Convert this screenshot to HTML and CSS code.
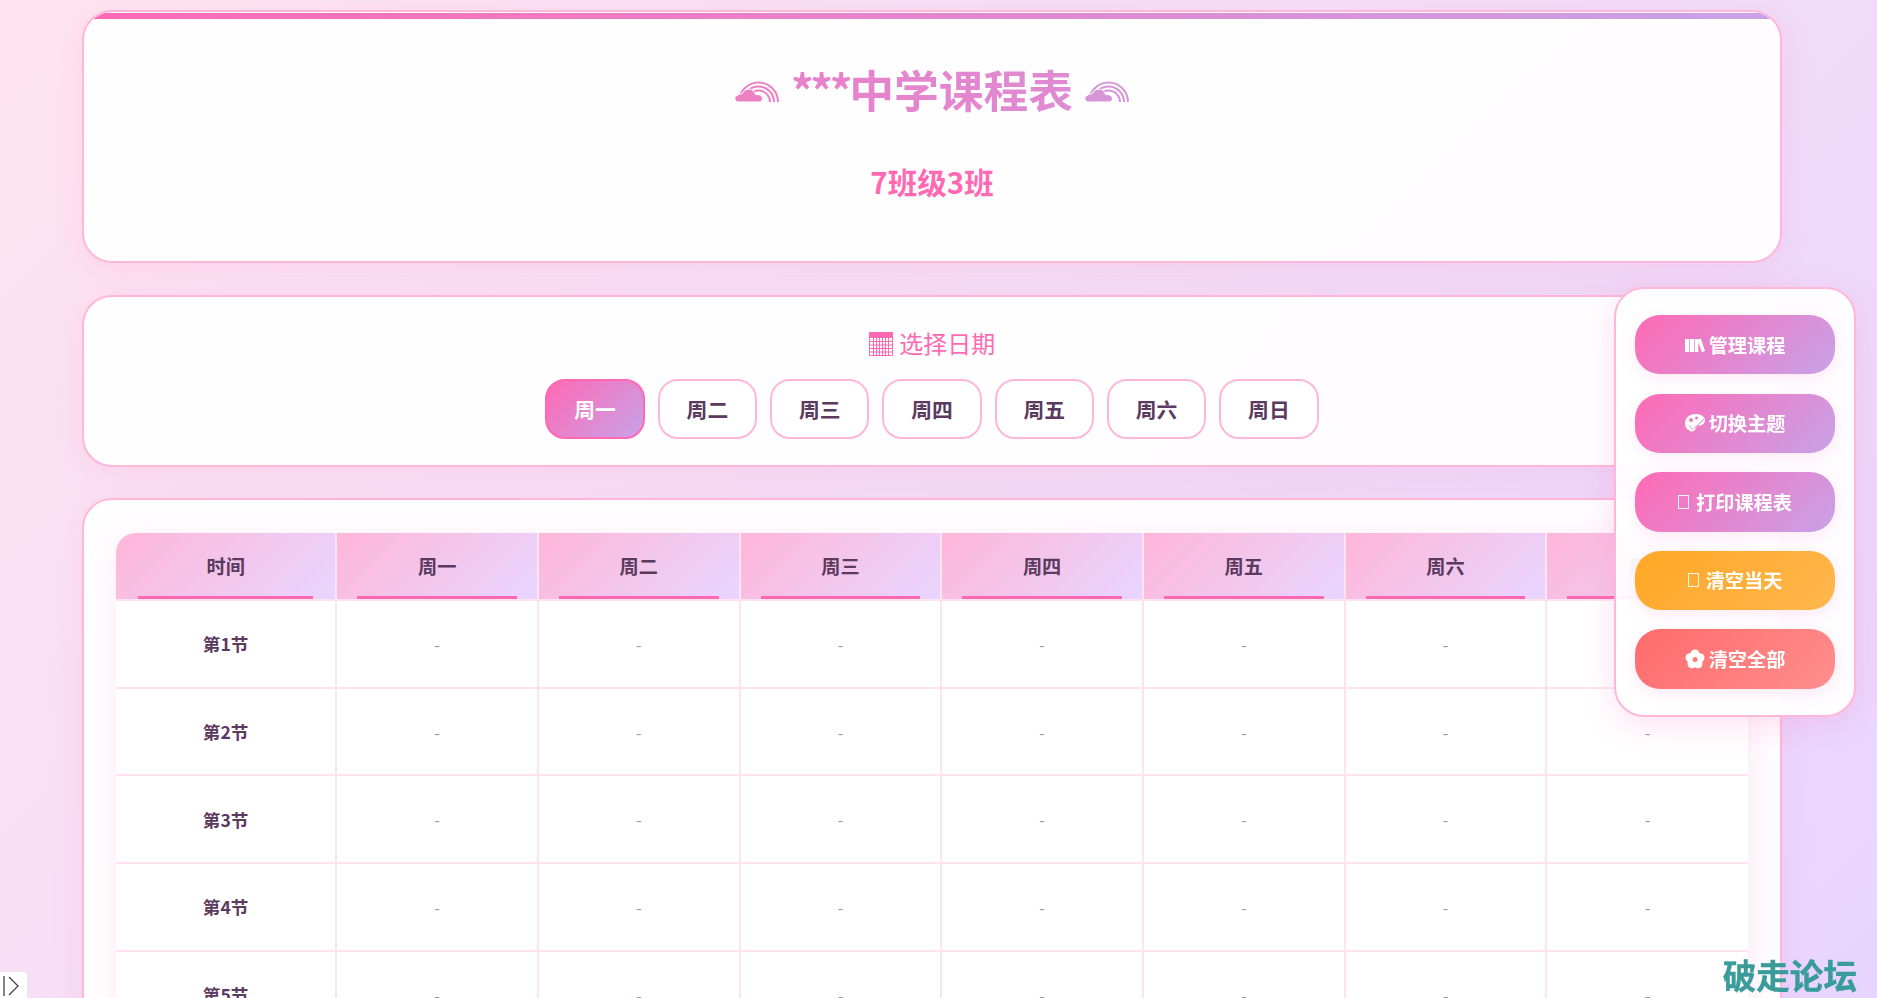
FILE: index.html
```html
<!DOCTYPE html>
<html lang="zh-CN">
<head>
  <meta charset="UTF-8">
  <title>***中学课程表</title>
  <link rel="stylesheet" href="styles.css">
</head>
<body>
<div class="container">
  <header class="card header">
    <h1 class="title">
      <svg class="rainbow rainbow-left" viewBox="0 0 44 21"><use href="#rainbow-art"/></svg>
      <span class="title-text"><span class="stars">***</span>中学课程表</span>
      <svg class="rainbow rainbow-right" viewBox="0 0 44 21"><use href="#rainbow-art"/></svg>
    </h1>
    <div class="class-name">7班级3班</div>
  </header>

  <section class="card date-card">
    <h3 class="date-title">
      <svg class="calendar" viewBox="0 0 24 24">
        <path d="M0 0h24v6H0z"/>
        <path class="calendar-lines" d="M.5 6v17.500h23V6M4.500 6v17.500M7.500 6v17.500M10.500 6v17.500M13.500 6v17.500M16.500 6v17.500M19.500 6v17.500M.5 9.500h23M.5 13h23M.5 16.500h23M.5 20h23"/>
      </svg>
      选择日期
    </h3>
    <div class="days">
      <button class="day active">周一</button>
      <button class="day">周二</button>
      <button class="day">周三</button>
      <button class="day">周四</button>
      <button class="day">周五</button>
      <button class="day">周六</button>
      <button class="day">周日</button>
    </div>
  </section>

  <section class="card table-card">
    <table class="schedule">
      <thead>
        <tr><th class="time-col">时间</th><th>周一</th><th>周二</th><th>周三</th><th>周四</th><th>周五</th><th>周六</th><th>周日</th></tr>
      </thead>
      <tbody>
        <tr><td class="period">第1节</td><td>-</td><td>-</td><td>-</td><td>-</td><td>-</td><td>-</td><td>-</td></tr>
        <tr><td class="period">第2节</td><td>-</td><td>-</td><td>-</td><td>-</td><td>-</td><td>-</td><td>-</td></tr>
        <tr><td class="period">第3节</td><td>-</td><td>-</td><td>-</td><td>-</td><td>-</td><td>-</td><td>-</td></tr>
        <tr><td class="period">第4节</td><td>-</td><td>-</td><td>-</td><td>-</td><td>-</td><td>-</td><td>-</td></tr>
        <tr><td class="period">第5节</td><td>-</td><td>-</td><td>-</td><td>-</td><td>-</td><td>-</td><td>-</td></tr>
      </tbody>
    </table>
  </section>
</div>

<aside class="actions">
  <button class="action">
    <svg class="action-icon" viewBox="0 0 20 20"><path d="M0 4h4.300v13H0zM5 4h4.300v13H5zM10 4h3.300v13H10zM13.300 4.500l2.500-1L20 16l-3 1.200-3.700-9.700z"/></svg>
    管理课程
  </button>
  <button class="action">
    <svg class="action-icon" viewBox="0 0 20 20"><path fill-rule="evenodd" d="M10.500 1C16 1 20 3.500 20 7.500c0 3-3 5-6 5-2 0-2.500 1-3 2.500-.5 1.800-2 3.500-4.500 3.500-1 0-1.500-.5-2-1C2 16.500 0 14 0 10.500 0 5 4.500 1 10.500 1zM6 5a2 2 0 1 0 0 4 2 2 0 0 0 0-4zM11.500 3.500a1.500 1.500 0 1 0 0 3 1.500 1.500 0 0 0 0-3z"/><path class="palette-cut" d="M19 6L9 15.500M4 12.500l4 4"/></svg>
    切换主题
  </button>
  <button class="action">
    <span class="tofu"></span>
    打印课程表
  </button>
  <button class="action action-orange">
    <span class="tofu"></span>
    清空当天
  </button>
  <button class="action action-red">
    <svg class="action-icon" viewBox="0 0 20 20">
      <circle cx="10" cy="5" r="4.500"/><circle cx="15" cy="8.800" r="4.500"/><circle cx="13" cy="14.700" r="4.500"/><circle cx="7" cy="14.700" r="4.500"/><circle cx="5" cy="8.800" r="4.500"/>
      <circle class="flower-eye" cx="10" cy="10.500" r="2.500"/>
    </svg>
    清空全部
  </button>
</aside>

<div class="watermark">破走论坛</div>

<div class="side-toggle">
  <svg viewBox="0 0 20 24"><path d="M4 2v20M9 3l9 9-9 9" /></svg>
</div>

<svg class="defs" width="0" height="0">
  <defs>
    <g id="rainbow-art">
      <g fill="none" stroke="currentColor" stroke-width="2">
        <path d="M4 21a19.500 19.500 0 0 1 39 0"/>
        <path d="M8 21a15.500 15.500 0 0 1 31 0"/>
        <path d="M12 21a11.500 11.500 0 0 1 23 0"/>
      </g>
      <path fill="currentColor" stroke="#fff" stroke-width="1" d="M3.500 21a3.500 3.500 0 0 1-.5-7c1-1 2.500-1.500 4-1C8 10 11 8 14 8c3.500 0 6 2.500 6.500 5.500 3.500-.5 7 1.500 7 4 0 2-1.500 3.500-3.500 3.500z"/>
    </g>
  </defs>
</svg>
</body>
</html>
```

FILE: styles.css
```css
* { box-sizing: border-box; }
html, body { height: 100%; overflow: hidden; }
body { margin: 0; padding: 10px 23px 10px 10px; font-family: "Noto Sans CJK SC", "Noto Sans", sans-serif; color: #5a3a5e; background: linear-gradient(135deg, #ffe4ef 0%, #e8d5ff 100%); }
.container { max-width: 1700px; margin: 0 auto; }

.card { background: rgba(255, 255, 255, 0.95); border: 2px solid #ffb6d9; border-radius: 30px; margin-bottom: 31.500px; box-shadow: 0 8px 32px rgba(255, 105, 180, 0.12); }

.header { position: relative; height: 253px; padding-top: 41px; text-align: center; overflow: hidden; }
.header::before { content: ""; position: absolute; top: 1px; left: 0; right: 0; height: 6px; background: linear-gradient(90deg, #ff69b4, #c8a2e8); }
.title { margin: 0; font-size: 44.8px; line-height: 72px; font-weight: 700; background: linear-gradient(90deg, #ff69b4, #c8a2e8); -webkit-background-clip: text; background-clip: text; }
.title-text { -webkit-text-fill-color: transparent; color: transparent; }
.stars { letter-spacing: -3.300px; }
.rainbow { width: 44px; height: 21px; vertical-align: 6px; }
.rainbow-left { color: #ec82c4; margin-right: 2px; }
.rainbow-right { color: #d796d8; margin-left: 2px; }
.class-name { margin-top: 33px; font-size: 29.500px; line-height: 46px; font-weight: 700; color: #ff69b4; }

.date-card { height: 172px; padding-top: 27px; text-align: center; }
.date-title { margin: 0 0 17px; font-size: 24px; line-height: 38px; font-weight: 400; color: #ff69b4; }
.calendar { width: 24px; height: 24px; fill: #ff69b4; vertical-align: -3px; margin-right: 1px; }
.calendar-lines { fill: none; stroke: #ff69b4; stroke-width: 1; }
.days { display: flex; justify-content: center; gap: 12.800px; }
.day { width: 99.500px; height: 60px; border: 2px solid #ffb6d9; border-radius: 20px; background: #fff; color: #5a3a5e; font: 600 20.8px "Noto Sans CJK SC", sans-serif; }
.day.active { color: #fff; border-color: #ff69b4; background: linear-gradient(135deg, #ff69b4, #c8a2e8); }

.table-card { padding: 33px 32px 32px; height: 900px; }
.schedule { width: 100%; table-layout: fixed; border-collapse: collapse; background: #fff; box-shadow: 0 8px 32px rgba(255, 105, 180, 0.15); border-radius: 20px 20px 0 0; }
.schedule th, .schedule td { border: 2px solid #ffe4f0; text-align: center; }
.schedule th { position: relative; height: 67px; padding: 0; font-size: 19.2px; font-weight: 600; border-top: 0; background: linear-gradient(135deg, #ffb6d9, #e8d5ff); }
.schedule th:first-child, .schedule td:first-child { border-left: 0; }
.schedule th:last-child, .schedule td:last-child { border-right: 0; }
.schedule th::after { content: ""; position: absolute; left: 10%; bottom: 0; width: 80%; height: 3px; background: #ff69b4; }
.schedule .time-col { width: 13.5%; border-top-left-radius: 20px; }
.schedule td { height: 87.700px; font-size: 16px; color: #999; }
.schedule .period { font-size: 17.6px; font-weight: 600; color: #5a3a5e; }

.actions { position: fixed; top: 287px; right: 21px; width: 242px; display: flex; flex-direction: column; gap: 19.2px; padding: 26px 19px; background: rgba(255, 255, 255, 0.95); border: 2px solid #ffb6d9; border-radius: 30px; box-shadow: 0 8px 32px rgba(255, 105, 180, 0.2); }
.action { display: flex; align-items: center; justify-content: center; gap: 4px; height: 59.400px; border: 0; border-radius: 25px; color: #fff; font: 600 19.2px "Noto Sans CJK SC", sans-serif; background: linear-gradient(135deg, #ff69b4, #c8a2e8); box-shadow: 0 4px 15px rgba(255, 105, 180, 0.15); }
.action-orange { background: linear-gradient(135deg, #ffa726, #ffb74d); }
.action-red { background: linear-gradient(135deg, #ff6b6b, #ff8e8e); }
.action-icon { width: 20px; height: 20px; fill: #fff; }
.palette-cut { fill: none; stroke: #e87ec4; stroke-width: 1; }
.flower-eye { fill: #ff7a7a; }
.tofu { width: 11px; height: 14px; border: 1px solid rgba(255, 255, 255, 0.9); margin-right: 3px; }

.watermark { position: fixed; right: 20px; bottom: 3px; font-size: 33.600px; line-height: 40px; font-weight: 700; color: #3a9c9a; -webkit-text-stroke: 0.4px #3a9c9a; }
.side-toggle { position: fixed; left: 0; bottom: 0; width: 27px; height: 26px; background: #fff; border-top-right-radius: 4px; }
.side-toggle svg { display: block; width: 20px; height: 24px; margin-top: 2px; fill: none; stroke: #444; stroke-width: 1.300; }
.defs { position: absolute; }
```
